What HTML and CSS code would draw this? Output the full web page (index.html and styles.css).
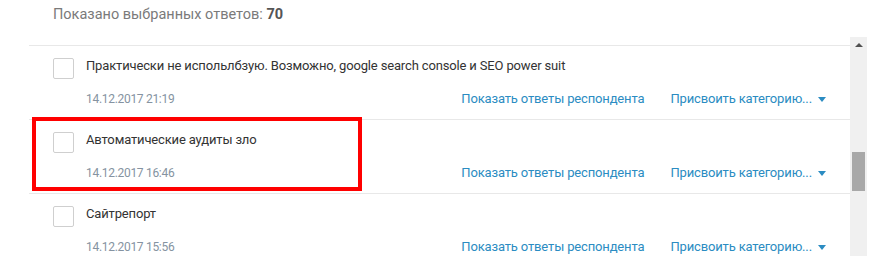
FILE: index.html
```html
<!DOCTYPE html>
<html lang="ru">
<head>
  <meta charset="UTF-8" />
  <title>Ответы</title>
  <link rel="stylesheet" href="styles.css">
</head>
<body>

<div class="summary">Показано выбранных ответов: <b>70</b></div>

<div class="panel">
  <div class="answers">

    <div class="answer">
      <div class="answer-main">
        <span class="check"></span>
        <span class="answer-text">Практически не испольлбзую. Возможно, google search console и SEO power suit</span>
      </div>
      <div class="answer-meta">
        <span class="date">14.12.2017 21:19</span>
        <a class="link" href="#">Показать ответы респондента</a>
        <a class="link category" href="#">Присвоить категорию... <span class="caret"></span></a>
      </div>
    </div>

    <div class="answer">
      <div class="highlight"></div>
      <div class="answer-main">
        <span class="check"></span>
        <span class="answer-text">Автоматические аудиты зло</span>
      </div>
      <div class="answer-meta">
        <span class="date">14.12.2017 16:46</span>
        <a class="link" href="#">Показать ответы респондента</a>
        <a class="link category" href="#">Присвоить категорию... <span class="caret"></span></a>
      </div>
    </div>

    <div class="answer">
      <div class="answer-main">
        <span class="check"></span>
        <span class="answer-text">Сайтрепорт</span>
      </div>
      <div class="answer-meta">
        <span class="date">14.12.2017 15:56</span>
        <a class="link" href="#">Показать ответы респондента</a>
        <a class="link category" href="#">Присвоить категорию... <span class="caret"></span></a>
      </div>
    </div>

  </div>

  <div class="scrollbar">
    <span class="scroll-up"></span>
    <span class="scroll-thumb"></span>
  </div>
</div>

</body>
</html>
```

FILE: styles.css
```css
body {
  margin: 0;
  padding: 0;
  background: white;
  font-family: Roboto, "Liberation Sans", sans-serif;
  overflow: hidden;
}

.summary {
  height: 37px;
  box-sizing: border-box;
  padding: 5px 0 0 53px;
  font-size: 14.5px;
  line-height: 20px;
  color: #7a7a7a;
}

.summary b {
  color: #555;
  font-weight: bold;
}

.panel {
  display: flex;
  height: 219px;
}

.answers {
  margin-left: 29px;
  width: 821px;
  padding-top: 8px;
  overflow: hidden;
}

.answer {
  position: relative;
  height: 74px;
  box-sizing: border-box;
  border-top: 1px solid #e8e8e8;
  padding: 10px 24px 0 24px;
}

.answer-main {
  display: flex;
  align-items: flex-start;
}

.check {
  width: 19px;
  height: 19px;
  margin-top: 2px;
  border: 1px solid #cfcfcf;
  border-radius: 2px;
  flex-shrink: 0;
}

.answer-text {
  margin-left: 12px;
  font-size: 13px;
  letter-spacing: -0.15px;
  line-height: 20px;
  color: #333;
}

.answer-meta {
  display: flex;
  align-items: center;
  margin-top: 10px;
  padding-left: 33px;
  line-height: 20px;
}

.date {
  font-size: 12px;
  letter-spacing: -0.3px;
  color: #8593a1;
  flex: 1;
}

.link {
  font-size: 13px;
  letter-spacing: -0.15px;
  color: #2b8cc2;
  text-decoration: none;
}

.category {
  margin-left: 26px;
}

.caret {
  display: inline-block;
  margin-left: 3px;
  vertical-align: middle;
  border-left: 4px solid transparent;
  border-right: 4px solid transparent;
  border-top: 5px solid #2b8cc2;
}

/* red annotation frame */
.highlight {
  position: absolute;
  left: 3px;
  top: -3px;
  width: 322px;
  height: 66px;
  border: 4px solid #ff0000;
  pointer-events: none;
}

.scrollbar {
  width: 17px;
  background: #f0f0f0;
  display: flex;
  flex-direction: column;
  align-items: center;
}

.scroll-up {
  margin-top: 6px;
  border-left: 4px solid transparent;
  border-right: 4px solid transparent;
  border-bottom: 4px solid #505050;
}

.scroll-thumb {
  margin-top: 105px;
  width: 13px;
  height: 39px;
  background: #a8a8a8;
}
```
